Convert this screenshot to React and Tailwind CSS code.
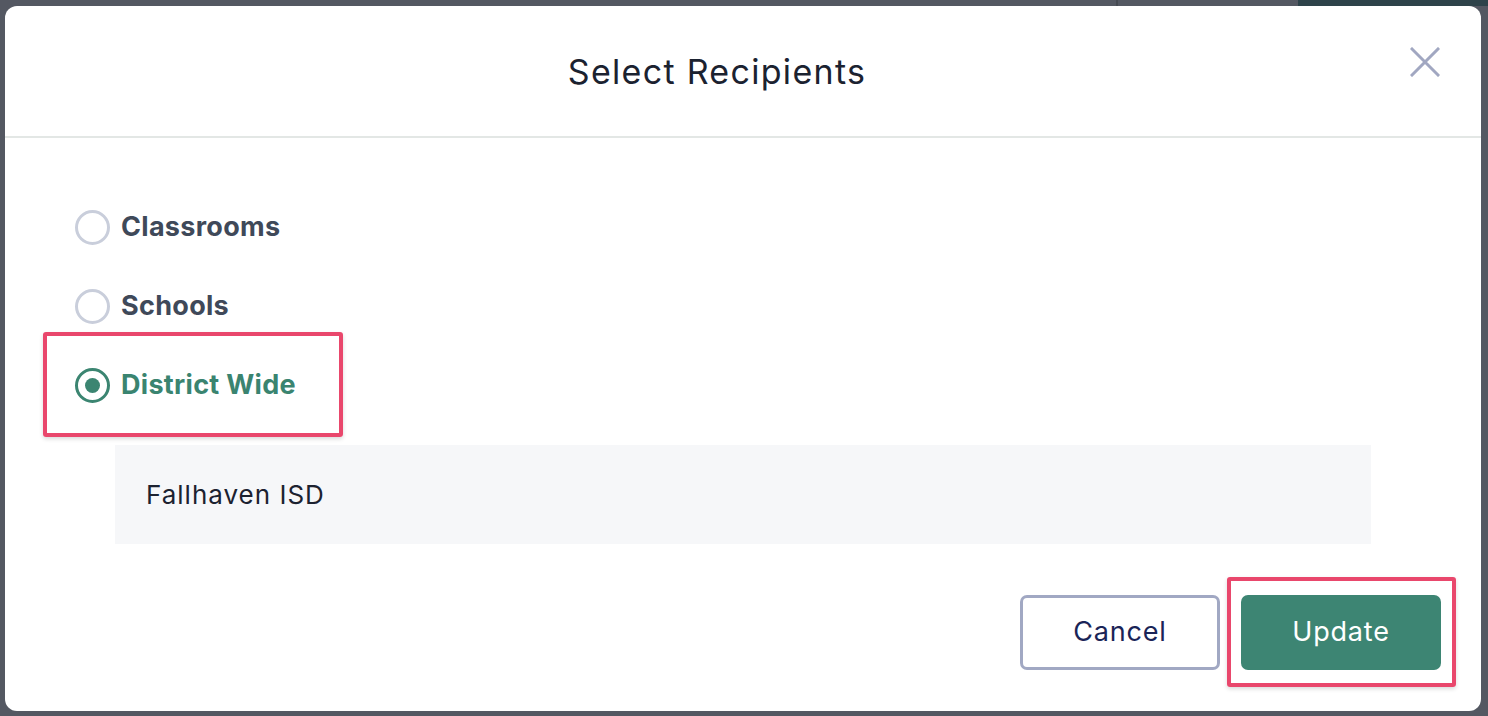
import React, { useState } from "react";

const options = ["Classrooms", "Schools", "District Wide"];

function Radio({ checked }) {
  return (
    <span
      className={`flex h-[35px] w-[35px] shrink-0 items-center justify-center rounded-full border-[3px] ${
        checked ? "border-[#3b8571]" : "border-[#c9cedb]"
      }`}
    >
      {checked && <span className="h-[15px] w-[15px] rounded-full bg-[#3b8571]" />}
    </span>
  );
}

export default function App() {
  const [choice, setChoice] = useState("District Wide");

  return (
    <div
      className="flex h-[716px] w-full flex-col bg-[#545862]"
      style={{ fontFamily: "Inter, 'Noto Sans', sans-serif" }}
    >
      {/* page behind the modal */}
      <div className="flex h-[6px] shrink-0">
        <div className="w-[1116px] bg-[#545862]" />
        <div className="w-[2px] bg-[#464a52]" />
        <div className="w-[180px] bg-[#545862]" />
        <div className="flex-1 bg-[#2e434a]" />
      </div>

      <div className="ml-[5px] mr-[7px] mb-[5px] flex flex-1 flex-col rounded-[12px] bg-white">
        {/* header */}
        <div className="relative flex h-[132px] shrink-0 items-center justify-center border-b-2 border-[#e3e7e5] pr-[52px]">
          <h2 className="text-[34px] font-normal tracking-[1.3px] text-[#1b2230]">Select Recipients</h2>
          <button className="absolute right-[40px] top-[40px] flex h-[32px] w-[32px] items-center justify-center text-[#a1a7c1]">
            <svg width="30" height="30" viewBox="0 0 30 30" fill="none" stroke="currentColor" strokeWidth="3" strokeLinecap="square">
              <path d="M2 2 L28 28 M28 2 L2 28" />
            </svg>
          </button>
        </div>

        {/* body */}
        <div className="flex flex-1 flex-col pt-[50px]">
          <div className="flex flex-col pl-[70px]">
            {options.map((o) => {
              const checked = choice === o;
              return (
                <div key={o} className="relative flex h-[79px] items-center">
                  <button onClick={() => setChoice(o)} className="flex items-center gap-[11px]">
                    <Radio checked={checked} />
                    <span
                      className={`text-[27px] font-bold tracking-[0.3px] ${
                        checked ? "text-[#3a8470]" : "text-[#3f4959]"
                      }`}
                    >
                      {o}
                    </span>
                  </button>
                  {checked && (
                    <span className="pointer-events-none absolute -left-[32px] -top-[14px] -bottom-[12px] w-[300px] rounded-[3px] border-4 border-[#e9476c] shadow-[0_2px_4px_rgba(0,0,0,0.15)]" />
                  )}
                </div>
              );
            })}
          </div>

          <div className="mx-[110px] mt-[20px] flex h-[99px] items-center bg-[#f6f7f9] pl-[31px]">
            <span className="text-[26px] tracking-[1px] text-[#1c2230]">Fallhaven ISD</span>
          </div>

          <div className="mt-[51px] flex justify-end gap-[21px] pr-[40px]">
            <button className="h-[75px] w-[200px] rounded-[7px] border-[3px] border-[#a1a8c3] bg-white text-[27px] tracking-[0.8px] text-[#1a2457]">
              Cancel
            </button>
            <div className="relative">
              <button className="h-[75px] w-[200px] rounded-[7px] bg-[#3d8573] text-[27px] tracking-[0.8px] text-white">
                Update
              </button>
              <span className="pointer-events-none absolute -left-[14px] -right-[15px] -top-[18px] -bottom-[17px] rounded-[3px] border-4 border-[#e9476c] shadow-[0_2px_4px_rgba(0,0,0,0.15)]" />
            </div>
          </div>
        </div>
      </div>
    </div>
  );
}
